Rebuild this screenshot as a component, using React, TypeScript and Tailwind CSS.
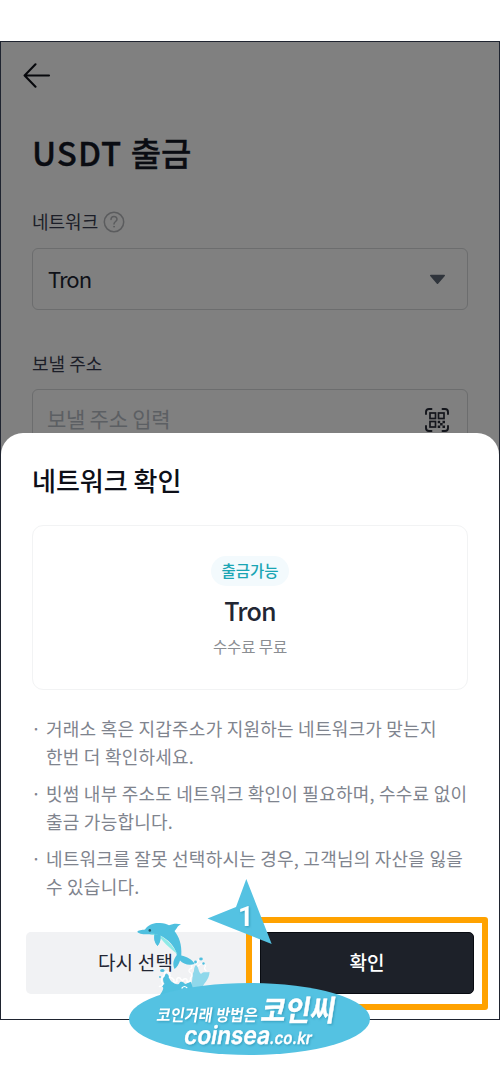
import type { ReactNode } from "react";

function BackArrow() {
  return (
    <svg className="block" width="28" height="26" viewBox="0 0 28 26" fill="none" stroke="#07080c" strokeWidth="2.1" strokeLinecap="round" strokeLinejoin="round">
      <path d="M26 13.500H2M12.500 2.300L1.600 13.500L12.500 24.700" />
    </svg>
  );
}

function HelpIcon() {
  return (
    <svg className="block" width="22" height="22" viewBox="0 0 22 22" fill="none" stroke="#5b5c5e" strokeWidth="1.5" strokeLinecap="round">
      <circle cx="11" cy="11" r="9.7" />
      <path d="M8 8.6C8 4.5 14 4.6 14 8.2C14 10.6 11 10.4 11 13" />
      <circle cx="11" cy="15.7" r="0.5" fill="#5b5c5e" strokeWidth="0.8" />
    </svg>
  );
}

function QrIcon() {
  return (
    <svg className="block" width="26" height="26" viewBox="0 0 26 26" fill="none" stroke="#14161c" strokeWidth="1.9">
      <path strokeLinecap="round" d="M2 7V5Q2 2 5 2H7.500M18.500 2H21Q24 2 24 5V7M24 19V21Q24 24 21 24H18.500M7.500 24H5Q2 24 2 21V19" />
      <rect x="6" y="6" width="5.500" height="5.500" strokeWidth="1.7" />
      <rect x="14.500" y="6" width="5.500" height="5.500" strokeWidth="1.7" />
      <rect x="6" y="14.500" width="5.500" height="5.500" strokeWidth="1.7" />
      <path fill="#14161c" stroke="none" d="M13.700 13.700h2.500v2.500h-2.500zM18.500 13.700h2.500v2.500h-2.500zM16.100 16.100h2.500v2.500h-2.500zM13.700 18.500h2.500v2.500h-2.500zM18.500 18.500h2.500v2.500h-2.500z" />
    </svg>
  );
}

function Notice({ children }: { children: ReactNode }) {
  return (
    <li className="flex">
      <span className="-ml-px w-[15px] shrink-0">·</span>
      <span className="whitespace-nowrap">{children}</span>
    </li>
  );
}

function CoinseaLogo() {
  return (
    <svg className="absolute left-[128px] top-[915px]" width="244" height="142" viewBox="128 915 244 142">
      <path d="M188 992C193 983 192 978 193 973C195 971 193 968 196 965C199 967 198 972 201 974C204 971 205 973 209.500 972C209.500 980 203 983 200 992Z" fill="#8fd8eb" />
      <path d="M160 995C163 990 165 987 161 986L164.500 984C162 980 163 976 166.500 973.500C170 975 168 979 172 982C175 983 175 985 179 984C180 980 184 982 185 984C187 984 188 982 191 982L195 995Z" fill="#4fc0df" />
      <g fill="none" stroke="#fff" strokeLinecap="round" strokeLinejoin="round">
        <path strokeWidth="1.500" d="M159.500 986.500Q164 986 162 982Q160.500 978 164 976Q164 971 168 972Q171 974 169.500 977.500Q172 977 174 980Q173 984 177 981.500Q176 976.500 180 978Q182 982 184 979Q188 978 187 982Q191 982 190.500 978" />
        <path strokeWidth="1.200" d="M190.500 978Q193 976 191 973Q188 972 189.500 969Q193 969 191.500 966Q193 963 196 964Q198.500 962 198.500 959.500M198 966Q204 961 205.500 966Q203.500 969 206 970.500M182 988Q184.500 985 187 988" />
      </g>
      <g fill="#4fc0df">
        <ellipse cx="162.300" cy="970.500" rx="2.200" ry="1.600" />
        <circle cx="160" cy="977" r="0.900" />
        <ellipse cx="201" cy="959" rx="1.800" ry="1.400" />
        <circle cx="195.500" cy="962" r="1.400" />
        <circle cx="203.500" cy="963.500" r="1.200" />
        <path d="M137.300 932C138 930 142 930 145 929.500C148 925 153 922.500 160 923C164 923 167 924.200 169 925.300C173 923.300 177 923.300 181 924.300C177 926 177 929 174.500 931C179 937 182 944 181.300 955.500C187 957 192 959 194.700 964C189 966 183 964 180 960.500C179 964 177 967.500 174.500 969C172 963 174 959 176.800 955C175.500 947 168 939 160 935.500C161 940 160 943 157.500 946C155 943 154 939 154.500 935C150 933.500 145 934.500 142 934C140 933.500 138.500 933.200 137.300 932Z" />
      </g>
      <path d="M150 934C158 932 170 940 177.500 954C172 950 165 944 160.500 938L159.500 935.700L155 935.300Z" fill="#8eeae7" />
      <path d="M154.500 934C153.500 940 155 943 157.500 946C160 943 161 939 160.500 935Z" fill="#4fc0df" />
      <circle cx="149.800" cy="930.400" r="1.300" fill="#245a69" />
      <ellipse cx="249.500" cy="1019" rx="120.500" ry="36" fill="#54c2e2" />
      <g fill="#fff" fontFamily="'Noto Sans CJK KR', sans-serif" fontWeight="700" className="[filter:drop-shadow(1px_1.500px_1px_#278dadb0)]">
        <text transform="translate(156 1020.500) skewX(-9)" fontSize="16.500" textLength="101" lengthAdjust="spacingAndGlyphs">코인거래 방법은</text>
        <text transform="translate(260 1020.500) skewX(-9)" fontSize="29" textLength="74" lengthAdjust="spacingAndGlyphs" stroke="#fff" strokeWidth="0.5">코인씨</text>
        <text transform="translate(183 1043.500) skewX(-10)" fontFamily="Inter, sans-serif" fontSize="25" fontWeight="600" textLength="86" lengthAdjust="spacingAndGlyphs" stroke="#fff" strokeWidth="0.4">coinsea</text>
        <text transform="translate(269 1043.500) skewX(-10)" fontFamily="Inter, sans-serif" fontSize="17" fontWeight="600" textLength="42" lengthAdjust="spacingAndGlyphs" stroke="#fff" strokeWidth="0.3">.co.kr</text>
      </g>
    </svg>
  );
}

function StepMarker() {
  return (
    <svg className="absolute left-[205px] top-[876px]" width="70" height="72" viewBox="205 876 70 72">
      <path d="M246.300 879L271.700 944L207.500 918.500L236 907Z" fill="#54c2e2" />
      <text x="238" y="925.500" fontFamily="Roboto, sans-serif" fontSize="27" fontWeight="700" fill="#fff" className="[filter:drop-shadow(1px_1.500px_1px_#278dadb0)]">1</text>
    </svg>
  );
}

export default function App() {
  return (
    <div className="relative h-[1083px] w-[500px] overflow-hidden bg-white pt-[41px] font-['Noto_Sans_CJK_KR',sans-serif]">
      <main className="flex h-[979px] flex-col overflow-hidden border border-[#1f2430] bg-[#808080]">
        <section className="flex h-[391px] shrink-0 flex-col overflow-hidden px-[31px] pt-5">
          <button className="-ml-[9px] h-[26px] w-7 shrink-0"><BackArrow /></button>
          <h1 className="mt-[40px] h-12 shrink-0 whitespace-nowrap text-[33px] font-medium leading-[48px] text-[#0a0c12] [-webkit-text-stroke:0.3px_#0a0c12]"><span className="tracking-[1px]">USDT </span>출금</h1>
          <div className="mt-[33px] flex h-[26px] shrink-0 items-center gap-[5px]">
            <span className="-mt-[3px] text-[18px] leading-[26px] text-[#1c1e28]">네트워크</span>
            <HelpIcon />
          </div>
          <div className="mt-[13px] flex h-[62px] shrink-0 items-center justify-between rounded-[6px] border-[1.500px] border-[#6c6d6e] pl-[15px] pr-[21px]">
            <span className="-mt-[3px] text-[22px] leading-8 tracking-[-1px] text-[#0f1118]">Tron</span>
            <svg width="17" height="11" viewBox="0 0 17 11"><path d="M1.800 1.500H15.200L8.500 9.200Z" fill="#30353c" stroke="#30353c" strokeWidth="1.600" strokeLinejoin="round" /></svg>
          </div>
          <span className="mt-[40px] h-[26px] shrink-0 text-[18px] leading-[26px] text-[#1c1e28]">보낼 주소</span>
          <div className="mt-[13px] flex h-[62px] shrink-0 items-center justify-between rounded-[6px] border-[1.500px] border-[#6c6d6e] pl-[14px] pr-[17px]">
            <span className="-mt-[5px] text-[21px] leading-6 tracking-[-0.250px] text-[#5c5f63]">보낼 주소 입력</span>
            <QrIcon />
          </div>
        </section>

        <section className="flex grow flex-col rounded-t-[22px] bg-white px-[31px] pt-[29px]">
          <h2 className="h-9 text-[26px] font-medium leading-9 text-[#0d0f18]">네트워크 확인</h2>
          <div className="mt-[27px] flex h-[165px] shrink-0 flex-col items-center rounded-[11px] border-[1.500px] border-[#f2f3f4] pt-[30px]">
            <span className="flex h-[30px] w-[78px] items-center justify-center whitespace-nowrap rounded-full bg-[#f3fafd] text-[15.500px] font-medium text-[#1aa5b4]">출금가능</span>
            <span className="mt-[6px] text-[25px] font-medium leading-9 tracking-[-0.800px] text-[#222633]">Tron</span>
            <span className="mt-[6px] text-[15.500px] leading-6 tracking-[-0.100px] text-[#8b8e93]">수수료 무료</span>
          </div>
          <ul className="mt-[25px] flex flex-col gap-[10px] text-[18px] leading-[27.500px] tracking-[0.230px] text-[#7f848e]">
            <Notice>거래소 혹은 지갑주소가 지원하는 네트워크가 맞는지<br />한번 더 확인하세요.</Notice>
            <Notice>빗썸 내부 주소도 네트워크 확인이 필요하며, 수수료 없이<br />출금 가능합니다.</Notice>
            <Notice>네트워크를 잘못 선택하시는 경우, 고객님의 자산을 잃을<br />수 있습니다.</Notice>
          </ul>
          <div className="-mr-[7px] -ml-[6px] mt-[32px] flex h-[62px] shrink-0 gap-[13px]">
            <button className="w-[221px] shrink-0 rounded-[5px] bg-[#f1f2f4] pr-[2px] pb-[2px] text-[19px] tracking-[0.200px] text-[#222633]">다시 선택</button>
            <button className="w-[214px] shrink-0 rounded-[5px] border border-[#080b11] bg-[#1d2129] pb-[2px] text-[19px] font-medium text-white">확인</button>
          </div>
        </section>
      </main>
      <div className="absolute left-[246px] top-[917px] h-[93px] w-[242px] rounded-[3px] border-[6px] border-[#ffa200]" />
      <StepMarker />
      <CoinseaLogo />
    </div>
  );
}
